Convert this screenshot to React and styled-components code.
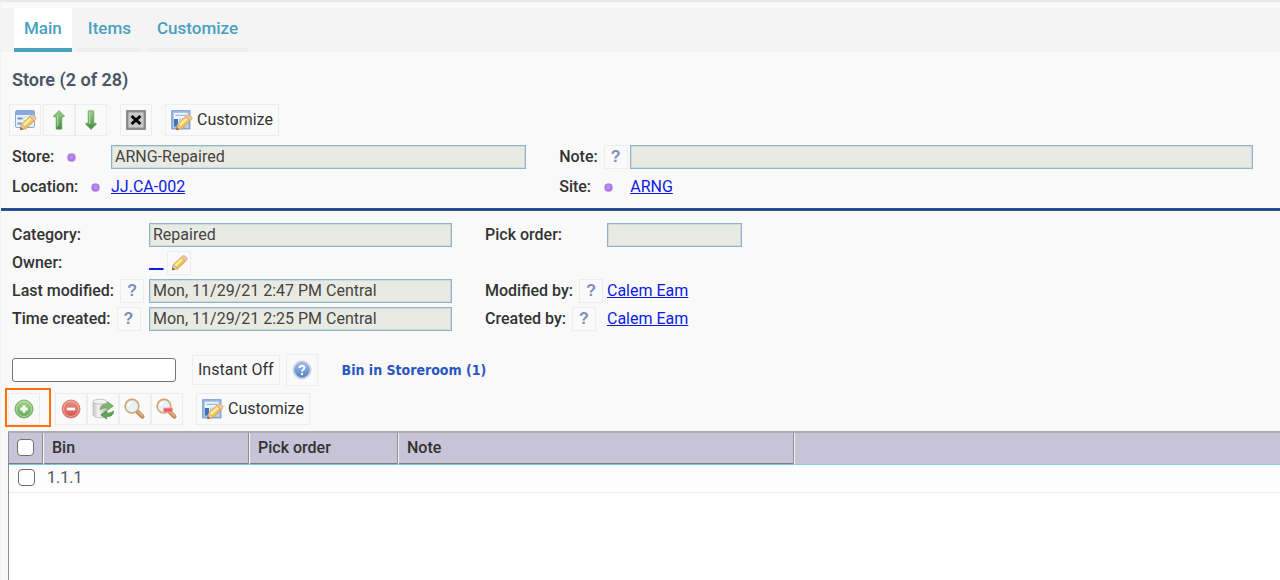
import { useState } from 'react'
import styled, { createGlobalStyle } from 'styled-components'

const bins = [{ id: 1, bin: '1.1.1', pickOrder: '', note: '' }]

export default function App() {
  const [checked, setChecked] = useState([])
  const [keyword, setKeyword] = useState('')

  const handleToggle = (id) => {
    setChecked((prev) => (prev.includes(id) ? prev.filter((v) => v !== id) : [...prev, id]))
  }

  const handleToggleAll = () => {
    setChecked((prev) => (prev.length === bins.length ? [] : bins.map((row) => row.id)))
  }

  return (
    <>
      <GlobalStyle />
      <IconDefs />
      <Page>
        <TabBar>
          <Tab href="#main" $active>
            Main
          </Tab>
          <Tab href="#items">Items</Tab>
          <Tab href="#customize">Customize</Tab>
        </TabBar>

        <Title>Store (2 of 28)</Title>
        <Toolbar>
          <ButtonGroup>
            <IconButton type="button" aria-label="Edit">
              <EditFormIcon />
            </IconButton>
          </ButtonGroup>
          <ButtonGroup $before={2}>
            <IconButton type="button" aria-label="Previous">
              <ArrowIcon />
            </IconButton>
            <IconButton type="button" aria-label="Next">
              <ArrowIcon down />
            </IconButton>
          </ButtonGroup>
          <ButtonGroup $before={13}>
            <IconButton type="button" aria-label="Close">
              <CloseIcon />
            </IconButton>
          </ButtonGroup>
          <ButtonGroup $before={13}>
            <TextButton type="button">
              <CustomizeIcon />
              Customize
            </TextButton>
          </ButtonGroup>
        </Toolbar>

        <HeaderForm>
          <LabelCell>
            <label htmlFor="store">Store:</label>
            <Required />
          </LabelCell>
          <Field id="store" defaultValue="ARNG-Repaired" readOnly />
          <LabelCell $second>
            <label htmlFor="note">Note:</label>
            <Help />
          </LabelCell>
          <Field id="note" defaultValue="" readOnly />

          <LabelCell>
            <span>Location:</span>
            <Required />
          </LabelCell>
          <ValueCell>
            <Link href="#location">JJ.CA-002</Link>
          </ValueCell>
          <LabelCell $second>
            <span>Site:</span>
            <Required />
          </LabelCell>
          <ValueCell>
            <Link href="#site">ARNG</Link>
          </ValueCell>
        </HeaderForm>

        <Divider />

        <DetailForm>
          <LabelCell>
            <label htmlFor="category">Category:</label>
          </LabelCell>
          <Field id="category" defaultValue="Repaired" readOnly />
          <LabelCell $second>
            <label htmlFor="pick-order">Pick order:</label>
          </LabelCell>
          <Field id="pick-order" defaultValue="" readOnly />

          <LabelCell>
            <span>Owner:</span>
          </LabelCell>
          <WideValueCell>
            <Link href="#owner">__</Link>
            <SmallButton type="button" aria-label="Edit owner">
              <PencilIcon />
            </SmallButton>
          </WideValueCell>

          <LabelCell>
            <label htmlFor="modified">Last modified:</label>
            <Help />
          </LabelCell>
          <Field id="modified" defaultValue="Mon, 11/29/21 2:47 PM Central" readOnly />
          <LabelCell $second>
            <span>Modified by:</span>
            <Help />
          </LabelCell>
          <ValueCell>
            <Link href="#modified-by">Calem Eam</Link>
          </ValueCell>

          <LabelCell>
            <label htmlFor="created">Time created:</label>
            <Help />
          </LabelCell>
          <Field id="created" defaultValue="Mon, 11/29/21 2:25 PM Central" readOnly />
          <LabelCell $second>
            <span>Created by:</span>
            <Help />
          </LabelCell>
          <ValueCell>
            <Link href="#created-by">Calem Eam</Link>
          </ValueCell>
        </DetailForm>

        <SearchBar>
          <SearchInput
            aria-label="Search bins"
            value={keyword}
            onChange={(e) => setKeyword(e.target.value)}
          />
          <InstantButton type="button">Instant Off</InstantButton>
          <IconButton type="button" aria-label="Help">
            <HelpIcon />
          </IconButton>
          <ListTitle>Bin in Storeroom (1)</ListTitle>
        </SearchBar>

        <ListToolbar>
          <Highlight>
            <IconButton type="button" aria-label="Add">
              <AddIcon />
            </IconButton>
          </Highlight>
          <ButtonGroup $before={15}>
            <IconButton type="button" aria-label="Remove">
              <RemoveIcon />
            </IconButton>
            <IconButton type="button" aria-label="Refresh">
              <RefreshIcon />
            </IconButton>
            <IconButton type="button" aria-label="Search">
              <SearchIcon />
            </IconButton>
            <IconButton type="button" aria-label="Clear search">
              <SearchIcon minus />
            </IconButton>
          </ButtonGroup>
          <ButtonGroup $before={13}>
            <TextButton type="button">
              <CustomizeIcon />
              Customize
            </TextButton>
          </ButtonGroup>
        </ListToolbar>

        <TableWrap>
          <Table>
            <colgroup>
              <Col $width={35} />
              <Col $width={206} />
              <Col $width={149} />
              <Col $width={396} />
              <col />
            </colgroup>
            <thead>
              <tr>
                <Th>
                  <Checkbox
                    aria-label="Select all"
                    checked={checked.length === bins.length}
                    onChange={handleToggleAll}
                  />
                </Th>
                <Th>Bin</Th>
                <Th>Pick order</Th>
                <Th>Note</Th>
                <ThRest />
              </tr>
            </thead>
            <tbody>
              {bins.map((row) => (
                <tr key={row.id}>
                  <Td $check>
                    <Checkbox
                      aria-label={row.bin}
                      checked={checked.includes(row.id)}
                      onChange={() => handleToggle(row.id)}
                    />
                  </Td>
                  <Td>{row.bin}</Td>
                  <Td>{row.pickOrder}</Td>
                  <Td>{row.note}</Td>
                  <Td />
                </tr>
              ))}
            </tbody>
          </Table>
        </TableWrap>
      </Page>
    </>
  )
}

function Help() {
  return (
    <SmallButton type="button" aria-label="Help">
      ?
    </SmallButton>
  )
}

function IconDefs() {
  return (
    <Defs aria-hidden="true">
      <defs>
        <linearGradient id="arrow" x1="0" y1="0" x2="0" y2="1">
          <stop offset="0" stopColor="#9fd08c" />
          <stop offset="1" stopColor="#3f8a3c" />
        </linearGradient>
        <linearGradient id="green" x1="0" y1="0" x2="0" y2="1">
          <stop offset="0" stopColor="#a5d393" />
          <stop offset="1" stopColor="#5da64c" />
        </linearGradient>
        <linearGradient id="red" x1="0" y1="0" x2="0" y2="1">
          <stop offset="0" stopColor="#ec8f84" />
          <stop offset="1" stopColor="#d6524a" />
        </linearGradient>
        <linearGradient id="blue" x1="0" y1="0" x2="0" y2="1">
          <stop offset="0" stopColor="#a5c3ea" />
          <stop offset="1" stopColor="#4f7fc2" />
        </linearGradient>
        <linearGradient id="silver" x1="0" y1="0" x2="1" y2="0">
          <stop offset="0" stopColor="#c4c4c4" />
          <stop offset="0.4" stopColor="#f3f3f3" />
          <stop offset="1" stopColor="#b9b9b9" />
        </linearGradient>
        <linearGradient id="pencil" x1="0" y1="0" x2="1" y2="1">
          <stop offset="0" stopColor="#fbe78c" />
          <stop offset="1" stopColor="#e2a93e" />
        </linearGradient>
      </defs>
    </Defs>
  )
}

function PencilShape() {
  return (
    <>
      <path d="M7.4 21.6 8.6 16 16.8 8.4 21.2 12.8 13.2 20.6Z" fill="url(#pencil)" stroke="#cf9a45" strokeWidth="0.8" />
      <path d="M10.8 17.2 18 10.4" stroke="#fff2a8" strokeWidth="2" />
      <path d="M7.4 21.6 8.6 16 13.2 20.6Z" fill="#e9cba3" stroke="#c39a68" strokeWidth="0.6" />
      <path d="M7 22 7.9 19 10.2 21.2Z" fill="#7d6450" />
      <path d="M16.8 8.4 18.2 7Q20 6 22 8T22.6 11.4L21.2 12.8Z" fill="#ecc5a4" stroke="#cfa078" strokeWidth="0.6" />
    </>
  )
}

function EditFormIcon() {
  return (
    <Icon viewBox="0 0 24 24">
      <rect x="2.5" y="2.5" width="19" height="17" rx="1.5" fill="#eaf1fb" stroke="#8aa8dc" />
      <path d="M3 3h18v4H3z" fill="#86a9e2" />
      <path d="M4.5 10.5h5M4.5 15.5h4" stroke="#6a92d6" strokeWidth="1.8" />
      <path d="M11 9h9v4h-9z" fill="#fff" stroke="#c3cbd8" strokeWidth="0.8" />
      <PencilShape />
    </Icon>
  )
}

function CustomizeIcon() {
  return (
    <Icon viewBox="0 0 24 24">
      <rect x="2.8" y="2.8" width="18" height="18" fill="#a9c5ee" stroke="#7a9bd2" strokeWidth="1.2" />
      <path d="M5 5h13.6v13.6H5z" fill="#f1f6fd" />
      <path d="M6.5 7.4h10.5" stroke="#9dbce8" strokeWidth="1.4" />
      <path d="M5 11h4v7.6H5z" fill="#3f70bd" />
      <path d="M10.5 11H18v7h-7.5z" fill="#dbe8fa" stroke="#a3bfe8" strokeWidth="0.8" />
      <PencilShape />
    </Icon>
  )
}

function ArrowIcon({ down }) {
  return (
    <Icon viewBox="0 0 24 24">
      <path
        d={
          down
            ? 'M12 21.4 6.8 16.2V15.2H9.2V3.4Q9.2 2.8 9.8 2.8H14.2Q14.8 2.8 14.8 3.4V15.2H17.2V16.2Z'
            : 'M12 2.6 17.2 7.8V8.8H14.8V20.6Q14.8 21.2 14.2 21.2H9.8Q9.2 21.2 9.2 20.6V8.8H6.8V7.8Z'
        }
        fill="url(#arrow)"
        stroke="#5f9c58"
        strokeWidth="0.7"
        strokeLinejoin="round"
      />
      <path d={down ? 'M10.8 4.5v11.5' : 'M10.8 7.5v11'} stroke="#c3e4b5" strokeWidth="1" />
    </Icon>
  )
}

function CloseIcon() {
  return (
    <Icon viewBox="0 0 24 24">
      <rect x="2.8" y="2.8" width="18.4" height="18.4" fill="#989898" stroke="#787878" strokeWidth="1.2" />
      <rect x="5" y="5" width="14" height="14" fill="#c6c6c6" stroke="#d2d2d2" strokeWidth="0.8" />
      <path d="m7.6 8 8.8 8M16.4 8l-8.8 8" stroke="#000" strokeWidth="3" />
    </Icon>
  )
}

function PencilIcon() {
  return (
    <Icon viewBox="4 4 21 21">
      <PencilShape />
    </Icon>
  )
}

function HelpIcon() {
  return (
    <Icon viewBox="0 0 24 24">
      <circle cx="12" cy="12" r="9" fill="#e4ebf5" stroke="#b3c1d6" strokeWidth="0.8" />
      <circle cx="12" cy="12" r="7.4" fill="url(#blue)" stroke="#7296cc" strokeWidth="0.8" />
      <path d="M9.6 10Q9.7 7.8 12 7.8T14.4 9.8Q14.4 11 13.2 11.7 12 12.4 12 13.6" fill="none" stroke="#fff" strokeWidth="1.9" />
      <circle cx="12" cy="16" r="1.2" fill="#fff" />
    </Icon>
  )
}

function AddIcon() {
  return (
    <Icon viewBox="0 0 24 24">
      <circle cx="12" cy="12" r="9" fill="url(#green)" stroke="#7db070" />
      <circle cx="12" cy="12" r="7.5" fill="none" stroke="#c5e3b9" strokeWidth="0.8" />
      <path d="M12 8.2v7.6M8.2 12h7.6" stroke="#fff" strokeWidth="2.8" />
    </Icon>
  )
}

function RemoveIcon() {
  return (
    <Icon viewBox="0 0 24 24">
      <circle cx="12" cy="12" r="9" fill="url(#red)" stroke="#d98178" />
      <circle cx="12" cy="12" r="7.5" fill="none" stroke="#f3b9b1" strokeWidth="0.8" />
      <path d="M7.8 12h8.4" stroke="#fff" strokeWidth="2.8" />
    </Icon>
  )
}

function RefreshIcon() {
  return (
    <Icon viewBox="0 0 24 24">
      <path d="M2 4.6v13.2Q2.6 20.8 8.8 20.8T16 17.8V4.6" fill="url(#silver)" stroke="#bdbdbd" strokeWidth="0.8" />
      <ellipse cx="9" cy="4.6" rx="7" ry="2.4" fill="#f3f3f3" stroke="#bababa" strokeWidth="0.8" />
      <path d="M9 12.6Q9.4 7.4 15 7.4H16.6V4.8L22.4 9 16.6 13.2V10.8Q12.4 10.4 9 12.6Z" fill="#7bb76c" stroke="#62a155" strokeWidth="0.7" />
      <path d="M22.6 14Q22.4 19.6 16.4 19.6H15.6V22L9.8 17.8 15.6 13.6V16.2Q20 16.4 22.6 14Z" fill="#5fa252" stroke="#4c8c43" strokeWidth="0.7" />
    </Icon>
  )
}

function SearchIcon({ minus }) {
  return (
    <Icon viewBox="0 0 24 24">
      <path d="m14.6 14.8 4.8 4.8" stroke="#bb8550" strokeWidth="4.2" strokeLinecap="round" />
      <path d="m15.2 14.8 4.4 4.2" stroke="#e3b27a" strokeWidth="1.8" strokeLinecap="round" />
      <circle cx="9" cy="9.2" r="6.8" fill="#e9f1fb" stroke="#cfa872" strokeWidth="1.7" />
      <path d="M5.2 9Q5.6 5.8 8.8 5.4" fill="none" stroke="#fff" strokeWidth="1.6" />
      {minus && <rect x="8.5" y="11" width="9" height="4.2" fill="#ee5a60" stroke="#f5aaaa" strokeWidth="0.8" />}
    </Icon>
  )
}

const GlobalStyle = createGlobalStyle`
  * {
    box-sizing: border-box;
  }

  body {
    margin: 0;
    background: #f9f9f9;
    color: #333;
    font-family: Roboto, 'Liberation Sans', sans-serif;
    font-size: 16px;
    line-height: 24px;
  }

  button,
  input {
    font: inherit;
    color: inherit;
  }
`

const Page = styled.main`
  display: flex;
  flex-direction: column;
  min-height: 100vh;
  border-top: 2px solid #e9e9e9;
  border-left: 1px solid #f3f3f3;
`

const TabBar = styled.nav`
  display: flex;
  gap: 6px;
  margin-top: 6px;
  padding-left: 13px;
  background: #f4f4f4;
`

const Tab = styled.a`
  padding: 8px 10px;
  border-bottom: 4px solid ${({ $active }) => ($active ? '#4aa1bd' : '#eee')};
  background: ${({ $active }) => ($active ? '#fff' : 'transparent')};
  color: #4aa1bf;
  font-size: 17px;
  font-weight: 500;
  text-decoration: none;
`

const Title = styled.h1`
  margin: 16px 0 12px 11px;
  color: #4a5464;
  font-size: 18px;
  line-height: 24px;
  font-weight: 600;
`

const Toolbar = styled.div`
  display: flex;
  padding-left: 8px;
`

const ListToolbar = styled(Toolbar)`
  margin-top: 7px;
  padding-left: 7px;
`

const ButtonGroup = styled.div`
  display: flex;
  margin-left: ${({ $before }) => $before || 0}px;
`

const BaseButton = styled.button`
  display: flex;
  align-items: center;
  justify-content: center;
  padding: 0;
  border: 1px solid #ededed;
  background: #fafafa;
  cursor: pointer;
`

const IconButton = styled(BaseButton)`
  width: 32px;
  height: 32px;
`

const TextButton = styled(BaseButton)`
  gap: 4px;
  height: 32px;
  padding: 0 5px 0 3px;
`

const InstantButton = styled(BaseButton)`
  height: 30px;
  margin: 0 6px 0 16px;
  padding: 0 5px;
`

const SmallButton = styled(BaseButton)`
  width: 24px;
  height: 24px;
  padding: 0;
  color: #7b8db8;
  font-family: 'Liberation Sans', sans-serif;
  font-weight: 700;
`

const Icon = styled.svg`
  display: block;
  width: 24px;
  height: 24px;

  ${SmallButton} & {
    width: 20px;
    height: 20px;
  }
`

const Defs = styled.svg`
  position: absolute;
  width: 0;
  height: 0;
`

const Highlight = styled.div`
  position: relative;

  &::after {
    content: '';
    position: absolute;
    inset: -5px -11px -2px -3px;
    border: 2px solid #ff6f0a;
    pointer-events: none;
  }
`

const HeaderForm = styled.div`
  display: grid;
  grid-template-columns: 99px 2fr 104px 3fr;
  row-gap: 6px;
  padding: 9px 27px 9px 11px;
`

const DetailForm = styled.div`
  display: grid;
  grid-template-columns: 137px minmax(160px, 303px) 155px 135px;
  row-gap: 4px;
  padding: 12px 11px 0;
`

const LabelCell = styled.div`
  display: flex;
  align-items: center;
  gap: 6px;
  padding-left: ${({ $second }) => ($second ? 33 : 0)}px;
  font-weight: 500;
  white-space: nowrap;
`

const ValueCell = styled.div`
  display: flex;
  align-items: center;
  gap: 4px;
`

const WideValueCell = styled(ValueCell)`
  grid-column: span 3;
`

const Required = styled.span`
  width: 9px;
  height: 9px;
  margin-left: 7px;
  border: 1px solid #b78be0;
  border-radius: 50%;
  background: radial-gradient(circle at 50% 45%, #c79af2, #9658d6);
`

const Field = styled.input`
  width: 100%;
  min-width: 0;
  height: 24px;
  padding: 0 3px;
  border: 1px solid #8fb3c8;
  border-radius: 0;
  outline: none;
  background: #e9ebe3;
  box-shadow: inset 0 0 0 1px #cddbe0;
  color: #444;
`

const Link = styled.a`
  color: #0b1be6;
  text-decoration: underline;
`

const Divider = styled.hr`
  width: 100%;
  height: 3px;
  margin: 0;
  border: 0;
  background: linear-gradient(#2a56ae, #20407e 60%, #4c6594);
`

const SearchBar = styled.div`
  display: flex;
  align-items: center;
  margin-top: 23px;
  padding-left: 11px;
`

const SearchInput = styled.input`
  width: 164px;
  height: 24px;
  padding: 0 4px;
  border: 1px solid #767676;
  border-radius: 3px;
  background: #fff;
`

const ListTitle = styled.h2`
  margin: 0 0 0 24px;
  color: #2a56c0;
  font-family: 'DejaVu Sans Condensed', 'DejaVu Sans', sans-serif;
  font-size: 14px;
  font-weight: 700;
`

const TableWrap = styled.div`
  flex: 1;
  margin: 6px 0 0 7px;
  border-top: 2px solid #adadad;
  border-left: 1px solid #8e8e8e;
  background: #fff;
`

const Table = styled.table`
  width: 100%;
  table-layout: fixed;
  border-collapse: separate;
  border-spacing: 0;
`

const Col = styled.col`
  width: ${({ $width }) => $width}px;
`

const Th = styled.th`
  height: 32px;
  padding: 0 0 2px 8px;
  border-right: 1px solid #f4f4f6;
  border-bottom: 1px solid #7cc4dd;
  background: #c6c4d6;
  box-shadow:
    inset -1px 0 #8f8f8f,
    inset 0 -1px #7d7d7d;
  font-weight: 500;
  text-align: left;
`

const ThRest = styled.th`
  padding: 0;
  border-bottom: 1px solid #8ccfe8;
  background: #c6c4d6;
`

const Td = styled.td`
  height: 28px;
  padding: ${({ $check }) => ($check ? '0 0 2px 9px' : '0 3px 2px')};
  border-bottom: 1px solid #eee;
  background: #fdfdfd;
  color: #4a5464;
`

const Checkbox = styled.input.attrs({ type: 'checkbox' })`
  display: block;
  appearance: none;
  width: 17px;
  height: 17px;
  margin: 0;
  border: 1px solid #707070;
  border-radius: 4px;
  background: #fff;

  &:checked {
    background: #0b6be6;
    box-shadow: inset 0 0 0 3px #fff;
  }
`
